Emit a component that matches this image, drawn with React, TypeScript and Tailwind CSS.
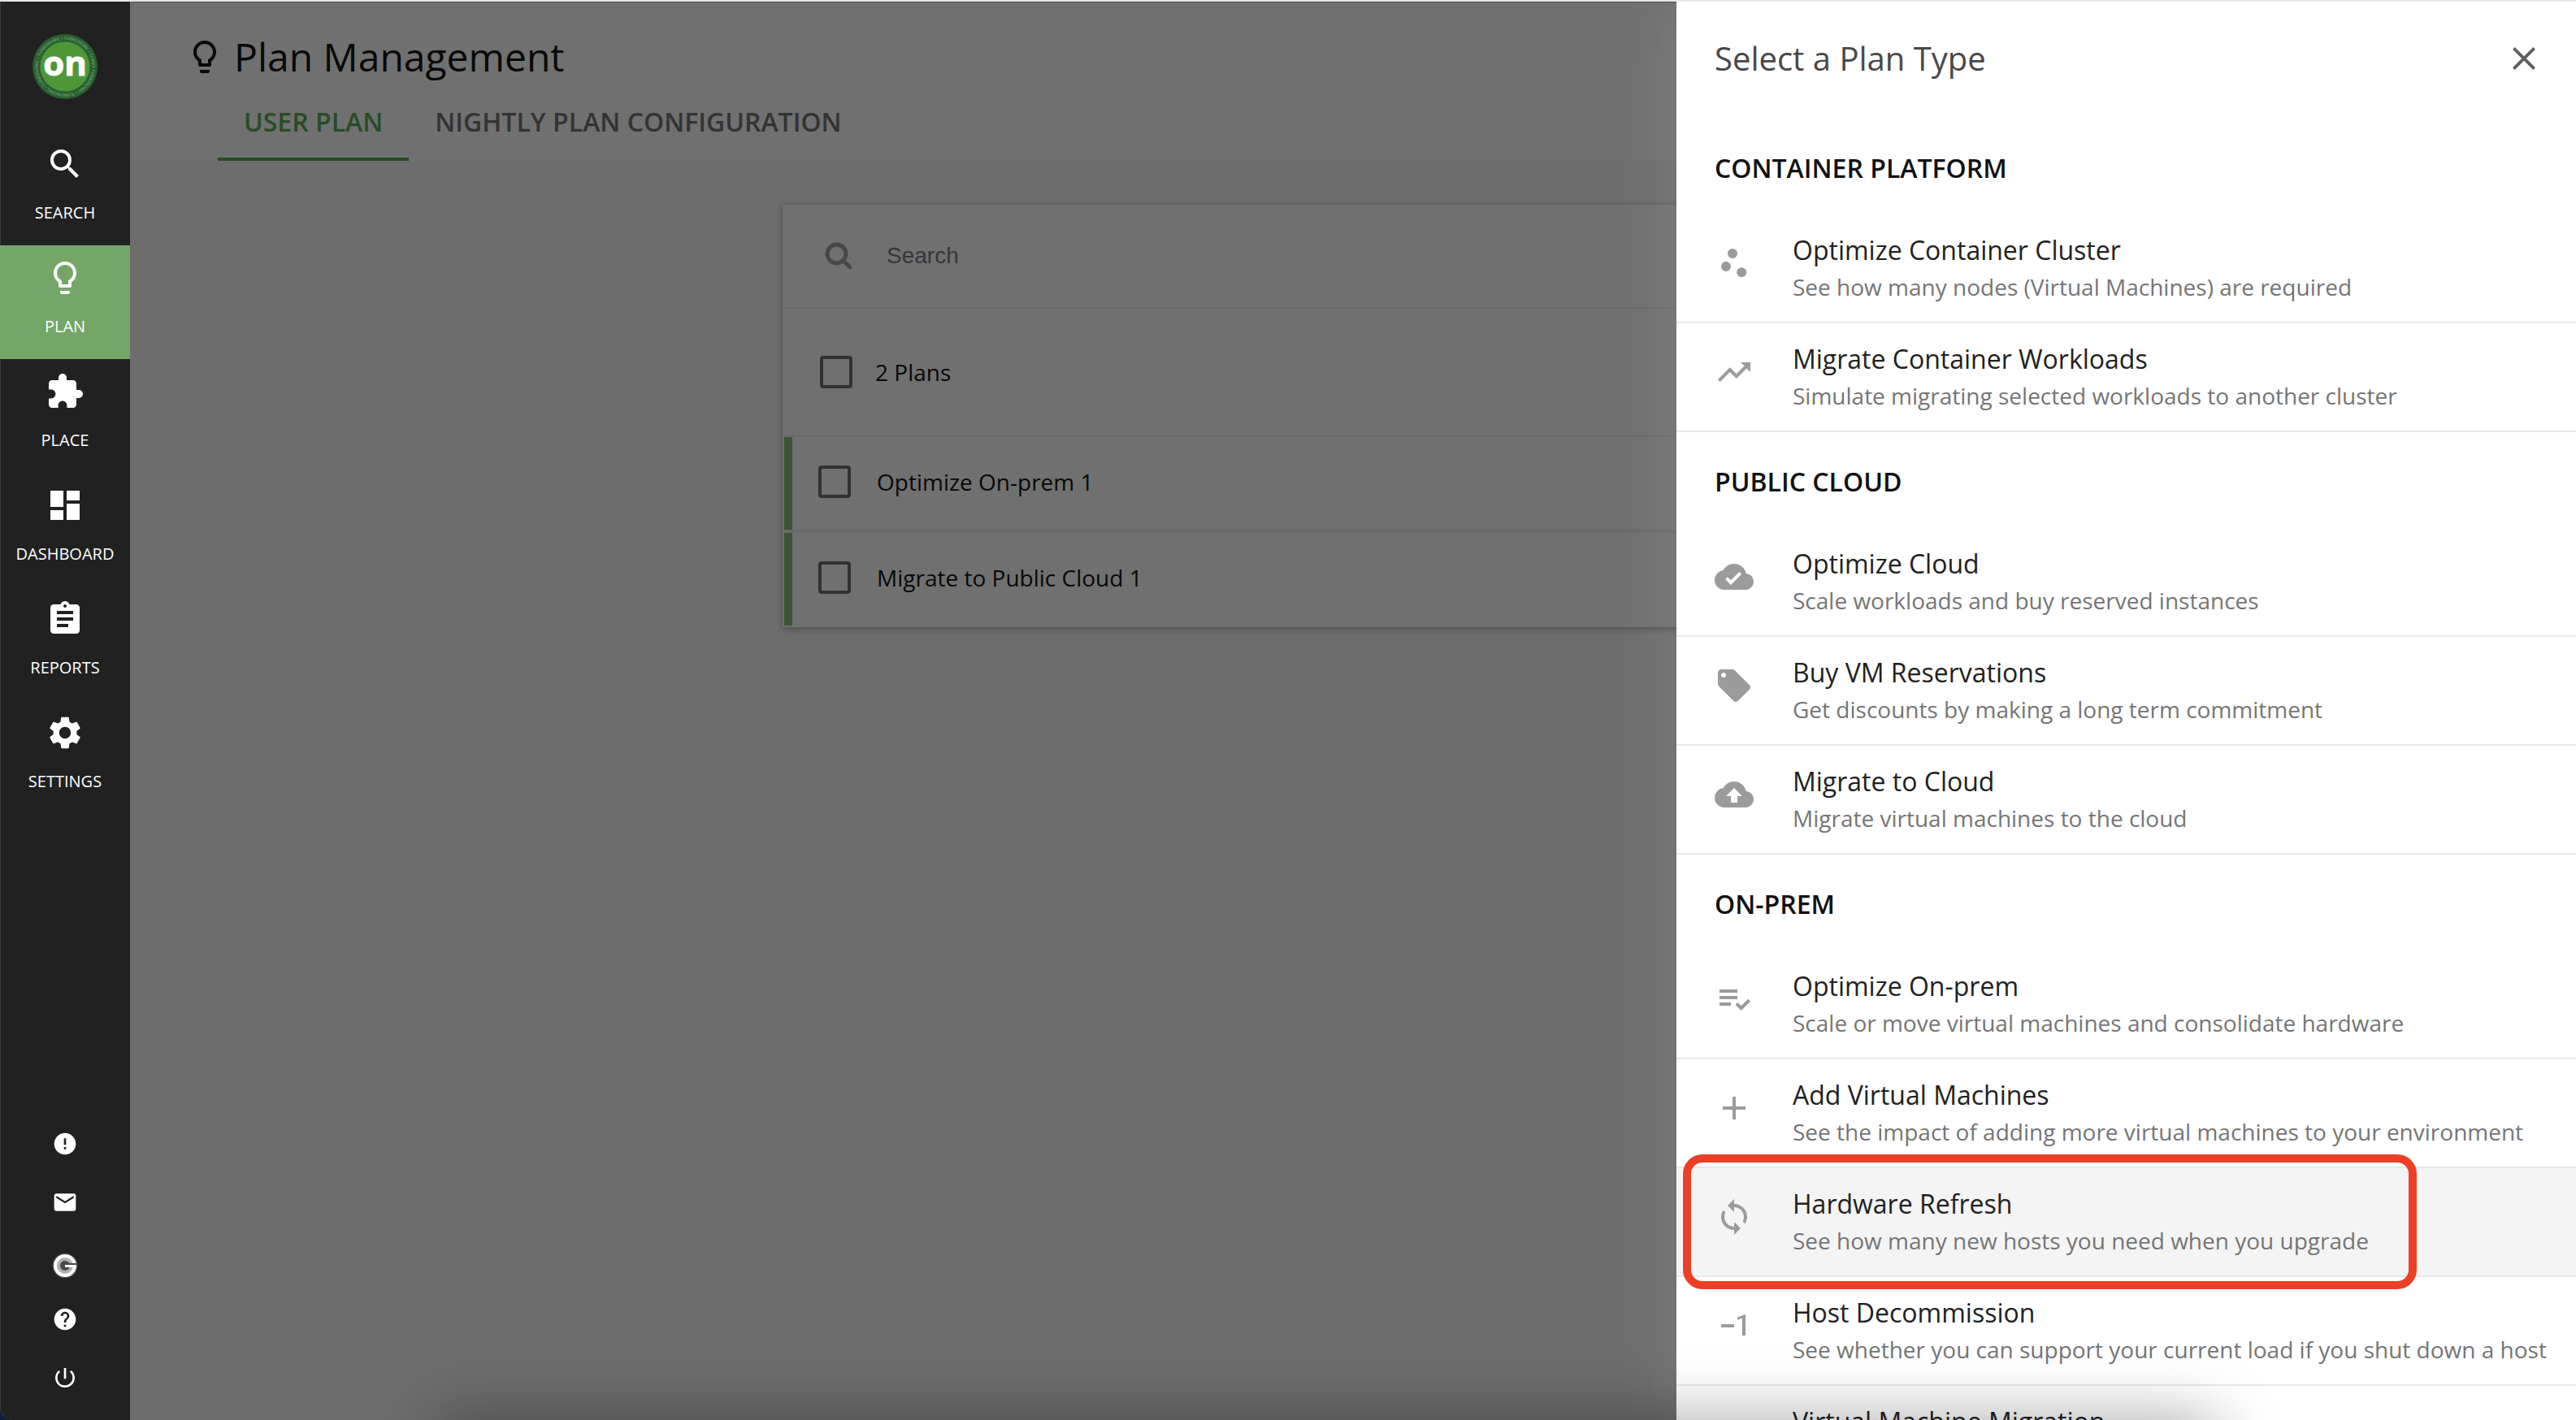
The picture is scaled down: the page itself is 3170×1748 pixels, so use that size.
import {
  MdAdd,
  MdAssignment,
  MdCloudDone,
  MdBackup,
  MdClose,
  MdDashboard,
  MdEmail,
  MdError,
  MdExposureNeg1,
  MdExtension,
  MdHelp,
  MdLightbulbOutline,
  MdLocalOffer,
  MdPlaylistAddCheck,
  MdPowerSettingsNew,
  MdScatterPlot,
  MdSearch,
  MdSettings,
  MdSync,
  MdTrendingUp,
} from "react-icons/md";
import type { IconType } from "react-icons";

type NavEntry = { label: string; icon: IconType; active?: boolean };

const navEntries: NavEntry[] = [
  { label: "SEARCH", icon: MdSearch },
  { label: "PLAN", icon: MdLightbulbOutline, active: true },
  { label: "PLACE", icon: MdExtension },
  { label: "DASHBOARD", icon: MdDashboard },
  { label: "REPORTS", icon: MdAssignment },
  { label: "SETTINGS", icon: MdSettings },
];

type PlanType = {
  title: string;
  description?: string;
  icon: IconType;
  highlighted?: boolean;
};

const planSections: { heading: string; items: PlanType[] }[] = [
  {
    heading: "CONTAINER PLATFORM",
    items: [
      {
        title: "Optimize Container Cluster",
        description: "See how many nodes (Virtual Machines) are required",
        icon: MdScatterPlot,
      },
      {
        title: "Migrate Container Workloads",
        description: "Simulate migrating selected workloads to another cluster",
        icon: MdTrendingUp,
      },
    ],
  },
  {
    heading: "PUBLIC CLOUD",
    items: [
      {
        title: "Optimize Cloud",
        description: "Scale workloads and buy reserved instances",
        icon: MdCloudDone,
      },
      {
        title: "Buy VM Reservations",
        description: "Get discounts by making a long term commitment",
        icon: MdLocalOffer,
      },
      {
        title: "Migrate to Cloud",
        description: "Migrate virtual machines to the cloud",
        icon: MdBackup,
      },
    ],
  },
  {
    heading: "ON-PREM",
    items: [
      {
        title: "Optimize On-prem",
        description: "Scale or move virtual machines and consolidate hardware",
        icon: MdPlaylistAddCheck,
      },
      {
        title: "Add Virtual Machines",
        description: "See the impact of adding more virtual machines to your environment",
        icon: MdAdd,
      },
      {
        title: "Hardware Refresh",
        description: "See how many new hosts you need when you upgrade",
        icon: MdSync,
        highlighted: true,
      },
      {
        title: "Host Decommission",
        description: "See whether you can support your current load if you shut down a host",
        icon: MdExposureNeg1,
      },
      {
        title: "Virtual Machine Migration",
        icon: MdTrendingUp,
      },
    ],
  },
];

const plans = ["Optimize On-prem 1", "Migrate to Public Cloud 1"];

function Logo() {
  return (
    <svg viewBox="0 0 80 80" className="size-20" role="img" aria-label="Turbonomic">
      <defs>
        <path id="ring" d="M73.2 40 A33.2 33.2 0 0 1 6.8 40 A33.2 33.2 0 0 1 73.2 40" />
      </defs>
      <circle cx="40" cy="40" r="40" fill="#28602f" />
      <circle cx="40" cy="40" r="30.5" fill="#4e9737" />
      <text fontSize="5" fill="#8fb48f" fontFamily="Open Sans, sans-serif">
        <textPath href="#ring">
          • TURBONOMIC • TURBONOMIC • TURBONOMIC • TURBONOMIC • TURBONOMIC • TURBONOMIC
        </textPath>
      </text>
      <text
        x="40"
        y="51"
        textAnchor="middle"
        fontSize="42"
        fontWeight="700"
        fill="#fff"
        stroke="#fff"
        strokeWidth="1"
        fontFamily="Liberation Sans Narrow, Open Sans, sans-serif"
      >
        on
      </text>
    </svg>
  );
}

function TargetIcon() {
  return (
    <svg viewBox="0 0 32 32" className="size-8" aria-hidden="true">
      <circle cx="16" cy="16" r="15.5" fill="#4a4a4a" />
      <circle cx="16" cy="16" r="14" fill="#fff" />
      <circle cx="16" cy="16" r="10" fill="#b0b0b0" />
      <circle cx="16" cy="16" r="6" fill="#4a4a4a" />
      <path d="M16 13h15v2H16z" fill="#4a4a4a" />
      <path d="M16 15h14v3H16z" fill="#fff" />
    </svg>
  );
}

const toolClass = "flex size-12 items-center justify-center";

function Sidebar() {
  return (
    <nav className="z-10 flex w-40 shrink-0 flex-col rounded-bl-2xl bg-[#212121] text-white shadow-[inset_1px_0_0_#3a3a3a]">
      <a href="#home" className="flex h-40 items-center justify-center">
        <Logo />
      </a>
      {navEntries.map(({ label, icon: Icon, active }) => (
        <a
          key={label}
          href={`#${label.toLowerCase()}`}
          className={`flex h-35 flex-col items-center gap-6 pt-4 ${active ? "bg-[#73a667]" : ""}`}
        >
          <Icon className="size-12" />
          <span className="text-[20px] leading-6">{label}</span>
        </a>
      ))}
      <div className="mt-auto flex flex-col items-center gap-6 pb-7">
        <button aria-label="Alerts" className={toolClass}>
          <MdError className="size-8" />
        </button>
        <button aria-label="Mail" className={toolClass}>
          <MdEmail className="size-8" />
        </button>
        <button aria-label="Targets" className="flex size-12 items-end justify-center pb-0.5">
          <TargetIcon />
        </button>
        <button aria-label="Help" className={toolClass}>
          <MdHelp className="size-8" />
        </button>
        <button aria-label="Log out" className={toolClass}>
          <MdPowerSettingsNew className="size-8" />
        </button>
      </div>
    </nav>
  );
}

const checkboxClass =
  "size-10 shrink-0 appearance-none rounded-sm border-4 border-[#323232] bg-transparent";

function PlanList() {
  return (
    <section className="mx-auto mt-[54px] w-full max-w-[1404px] bg-[#707070] text-[28px] leading-10 text-[#080808] shadow-[0_2px_8px_rgba(0,0,0,0.3)]">
      <label className="flex h-32 items-center border-b-2 border-[#6a6a6a] pl-13">
        <svg
          viewBox="0 0 34 34"
          className="size-[34px]"
          fill="none"
          stroke="#484848"
          strokeWidth="5"
          strokeLinecap="round"
          aria-hidden="true"
        >
          <circle cx="14.5" cy="14.5" r="11.5" />
          <path d="M23 23l8 8" />
        </svg>
        <input
          type="search"
          placeholder="Search"
          className="ml-[42px] h-12 flex-1 bg-transparent font-['Liberation_Sans',sans-serif] outline-none placeholder:text-[#343739]"
        />
      </label>
      <label className="flex h-[158px] items-center gap-7 border-b-2 border-[#6a6a6a] pl-[46px]">
        <input type="checkbox" className={checkboxClass} />
        2 Plans
      </label>
      <ul className="flex flex-col gap-1 bg-[#6a6a6a]">
        {plans.map((plan) => (
          <li key={plan} className="bg-[#707070] pl-0.5">
            <label className="flex h-[114px] items-center gap-8 border-l-10 border-[#3b5434] pb-1 pl-8">
              <input type="checkbox" className={checkboxClass} />
              {plan}
            </label>
          </li>
        ))}
      </ul>
      <div className="h-0.5" />
    </section>
  );
}

function MainArea() {
  return (
    <main className="flex min-w-0 flex-1 flex-col bg-[#6d6d6d]">
      <header className="ml-1 bg-[#707070] shadow-[inset_0_1px_0_#4a4a4a]">
        <h1 className="flex h-[100px] items-center gap-3 pt-9 pl-16 text-[48px] leading-[66px] text-[#080808]">
          <MdLightbulbOutline className="size-12" />
          Plan Management
        </h1>
        <div role="tablist" className="mt-2 flex pl-26 text-[32px] leading-11 font-semibold">
          <button role="tab" aria-selected="true" className="h-22 border-b-4 border-[#264d24] px-8 pb-1 text-[#264d24]">
            USER PLAN
          </button>
          <button role="tab" aria-selected="false" className="h-22 border-b-4 border-transparent px-8 pb-1 text-[#333]">
            NIGHTLY PLAN CONFIGURATION
          </button>
        </div>
      </header>
      <PlanList />
    </main>
  );
}

function PlanTypeRow({ title, description, icon: Icon, highlighted }: PlanType) {
  return (
    <li className="relative">
      <button
        className={`flex h-[134px] w-full items-start gap-12 border-b-2 border-[#e9e9e9] pt-5 pl-[47px] text-left ${
          highlighted ? "bg-[#f4f4f4]" : ""
        }`}
      >
        <Icon className="mt-4 size-12 shrink-0 text-[#9b9b9b]" />
        <span className="flex flex-col whitespace-nowrap">
          <span className="text-[32px] leading-12 text-[#212121]">{title}</span>
          {description && (
            <span className="text-[28px] leading-[42px] text-[#757575]">{description}</span>
          )}
        </span>
      </button>
      {highlighted && (
        <span className="absolute -top-[17px] -bottom-[15px] left-2 z-10 w-[903px] rounded-3xl border-10 border-[#ec4026]" />
      )}
    </li>
  );
}

function PlanTypePanel() {
  return (
    <aside
      role="dialog"
      aria-label="Select a Plan Type"
      className="absolute inset-y-0 right-0 w-[1107px] overflow-hidden bg-white shadow-[0_0_80px_rgba(255,255,255,0.12)]"
    >
      <div className="flex h-36 items-center justify-between pr-10 pb-1 pl-[47px]">
        <h2 className="text-[40px] leading-[56px] text-[#484848]">Select a Plan Type</h2>
        <button aria-label="Close">
          <MdClose className="size-12 text-[#616161]" />
        </button>
      </div>
      {planSections.map(({ heading, items }) => (
        <section key={heading}>
          <h3 className="flex h-[118px] items-center pt-1 pl-[47px] text-[32px] leading-11 font-semibold text-[#111]">
            {heading}
          </h3>
          <ul>
            {items.map((item) => (
              <PlanTypeRow key={item.title} {...item} />
            ))}
          </ul>
        </section>
      ))}
    </aside>
  );
}

export default function App() {
  return (
    <div className="relative flex h-screen flex-col overflow-hidden bg-[#0e2038] font-['Open_Sans',sans-serif]">
      <div className="h-0.5 shrink-0 bg-[#e9e5e3]" />
      <div className="relative flex min-h-0 flex-1">
        <Sidebar />
        <MainArea />
        <PlanTypePanel />
      </div>
      <div className="pointer-events-none absolute top-full right-[14%] left-[17%] h-40 shadow-[0_0_80px_rgba(0,0,0,0.35)]" />
    </div>
  );
}
